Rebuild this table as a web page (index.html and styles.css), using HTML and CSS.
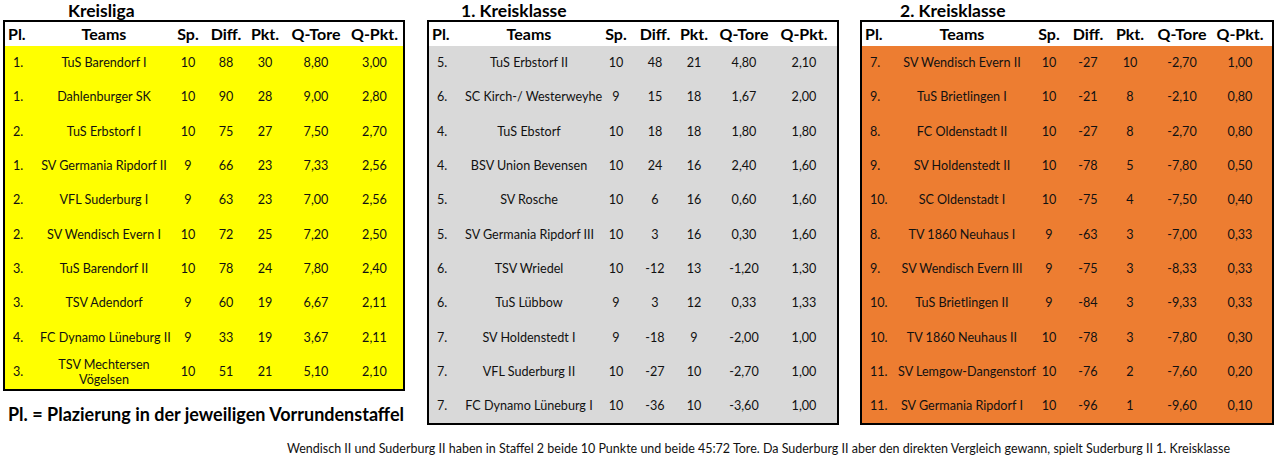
FILE: index.html
```html
<!DOCTYPE html>
<html lang="de">
<head>
<meta charset="utf-8">
<title>Tabellen</title>
<link rel="stylesheet" href="styles.css">
</head>
<body>
<div class="page">
  <div class="groups">
    <section class="group g1">
      <h2 class="title">Kreisliga</h2>
      <table class="tbl yellow">
        <colgroup><col class="c-pl"><col class="c-team"><col class="c-sp"><col class="c-diff"><col class="c-pkt"><col class="c-qt"><col class="c-qp"></colgroup>
        <thead><tr><th class="pl">Pl.</th><th>Teams</th><th>Sp.</th><th>Diff.</th><th>Pkt.</th><th>Q-Tore</th><th>Q-Pkt.</th></tr></thead>
        <tbody>
          <tr><td class="pl">1.</td><td class="team">TuS Barendorf I</td><td>10</td><td>88</td><td>30</td><td>8,80</td><td>3,00</td></tr>
          <tr><td class="pl">1.</td><td class="team">Dahlenburger SK</td><td>10</td><td>90</td><td>28</td><td>9,00</td><td>2,80</td></tr>
          <tr><td class="pl">2.</td><td class="team">TuS Erbstorf I</td><td>10</td><td>75</td><td>27</td><td>7,50</td><td>2,70</td></tr>
          <tr><td class="pl">1.</td><td class="team">SV Germania Ripdorf II</td><td>9</td><td>66</td><td>23</td><td>7,33</td><td>2,56</td></tr>
          <tr><td class="pl">2.</td><td class="team">VFL Suderburg I</td><td>9</td><td>63</td><td>23</td><td>7,00</td><td>2,56</td></tr>
          <tr><td class="pl">2.</td><td class="team">SV Wendisch Evern I</td><td>10</td><td>72</td><td>25</td><td>7,20</td><td>2,50</td></tr>
          <tr><td class="pl">3.</td><td class="team">TuS Barendorf II</td><td>10</td><td>78</td><td>24</td><td>7,80</td><td>2,40</td></tr>
          <tr><td class="pl">3.</td><td class="team">TSV Adendorf</td><td>9</td><td>60</td><td>19</td><td>6,67</td><td>2,11</td></tr>
          <tr><td class="pl">4.</td><td class="team">FC Dynamo Lüneburg II</td><td>9</td><td>33</td><td>19</td><td>3,67</td><td>2,11</td></tr>
          <tr><td class="pl">3.</td><td class="team wrap">TSV Mechtersen<br>Vögelsen</td><td>10</td><td>51</td><td>21</td><td>5,10</td><td>2,10</td></tr>
        </tbody>
      </table>
      <p class="legend">Pl. = Plazierung in der jeweiligen Vorrundenstaffel</p>
    </section>

    <section class="group g2">
      <h2 class="title">1. Kreisklasse</h2>
      <table class="tbl grey">
        <colgroup><col class="c-pl"><col class="c-team"><col class="c-sp"><col class="c-diff"><col class="c-pkt"><col class="c-qt"><col class="c-qp"></colgroup>
        <thead><tr><th class="pl">Pl.</th><th>Teams</th><th>Sp.</th><th>Diff.</th><th>Pkt.</th><th>Q-Tore</th><th>Q-Pkt.</th></tr></thead>
        <tbody>
          <tr><td class="pl">5.</td><td class="team">TuS Erbstorf II</td><td>10</td><td>48</td><td>21</td><td>4,80</td><td>2,10</td></tr>
          <tr><td class="pl">6.</td><td class="team">SC Kirch-/ Westerweyhe</td><td>9</td><td>15</td><td>18</td><td>1,67</td><td>2,00</td></tr>
          <tr><td class="pl">4.</td><td class="team">TuS Ebstorf</td><td>10</td><td>18</td><td>18</td><td>1,80</td><td>1,80</td></tr>
          <tr><td class="pl">4.</td><td class="team">BSV Union Bevensen</td><td>10</td><td>24</td><td>16</td><td>2,40</td><td>1,60</td></tr>
          <tr><td class="pl">5.</td><td class="team">SV Rosche</td><td>10</td><td>6</td><td>16</td><td>0,60</td><td>1,60</td></tr>
          <tr><td class="pl">5.</td><td class="team">SV Germania Ripdorf III</td><td>10</td><td>3</td><td>16</td><td>0,30</td><td>1,60</td></tr>
          <tr><td class="pl">6.</td><td class="team">TSV Wriedel</td><td>10</td><td>-12</td><td>13</td><td>-1,20</td><td>1,30</td></tr>
          <tr><td class="pl">6.</td><td class="team">TuS Lübbow</td><td>9</td><td>3</td><td>12</td><td>0,33</td><td>1,33</td></tr>
          <tr><td class="pl">7.</td><td class="team">SV Holdenstedt I</td><td>9</td><td>-18</td><td>9</td><td>-2,00</td><td>1,00</td></tr>
          <tr><td class="pl">7.</td><td class="team">VFL Suderburg II</td><td>10</td><td>-27</td><td>10</td><td>-2,70</td><td>1,00</td></tr>
          <tr><td class="pl">7.</td><td class="team">FC Dynamo Lüneburg I</td><td>10</td><td>-36</td><td>10</td><td>-3,60</td><td>1,00</td></tr>
        </tbody>
      </table>
    </section>

    <section class="group g3">
      <h2 class="title">2. Kreisklasse</h2>
      <table class="tbl orange">
        <colgroup><col class="c-pl"><col class="c-team"><col class="c-sp"><col class="c-diff"><col class="c-pkt"><col class="c-qt"><col class="c-qp"></colgroup>
        <thead><tr><th class="pl">Pl.</th><th>Teams</th><th>Sp.</th><th>Diff.</th><th>Pkt.</th><th>Q-Tore</th><th>Q-Pkt.</th></tr></thead>
        <tbody>
          <tr><td class="pl">7.</td><td class="team">SV Wendisch Evern II</td><td>10</td><td>-27</td><td>10</td><td>-2,70</td><td>1,00</td></tr>
          <tr><td class="pl">9.</td><td class="team">TuS Brietlingen I</td><td>10</td><td>-21</td><td>8</td><td>-2,10</td><td>0,80</td></tr>
          <tr><td class="pl">8.</td><td class="team">FC Oldenstadt II</td><td>10</td><td>-27</td><td>8</td><td>-2,70</td><td>0,80</td></tr>
          <tr><td class="pl">9.</td><td class="team">SV Holdenstedt II</td><td>10</td><td>-78</td><td>5</td><td>-7,80</td><td>0,50</td></tr>
          <tr><td class="pl">10.</td><td class="team">SC Oldenstadt I</td><td>10</td><td>-75</td><td>4</td><td>-7,50</td><td>0,40</td></tr>
          <tr><td class="pl">8.</td><td class="team">TV 1860 Neuhaus I</td><td>9</td><td>-63</td><td>3</td><td>-7,00</td><td>0,33</td></tr>
          <tr><td class="pl">9.</td><td class="team">SV Wendisch Evern III</td><td>9</td><td>-75</td><td>3</td><td>-8,33</td><td>0,33</td></tr>
          <tr><td class="pl">10.</td><td class="team">TuS Brietlingen II</td><td>9</td><td>-84</td><td>3</td><td>-9,33</td><td>0,33</td></tr>
          <tr><td class="pl">10.</td><td class="team">TV 1860 Neuhaus II</td><td>10</td><td>-78</td><td>3</td><td>-7,80</td><td>0,30</td></tr>
          <tr><td class="pl">11.</td><td class="team">SV Lemgow-Dangenstorf</td><td>10</td><td>-76</td><td>2</td><td>-7,60</td><td>0,20</td></tr>
          <tr><td class="pl">11.</td><td class="team">SV Germania Ripdorf I</td><td>10</td><td>-96</td><td>1</td><td>-9,60</td><td>0,10</td></tr>
        </tbody>
      </table>
    </section>
  </div>
  <p class="note">Wendisch II und Suderburg II haben in Staffel 2 beide 10 Punkte und beide 45:72 Tore. Da Suderburg II aber den direkten Vergleich gewann, spielt Suderburg II 1. Kreisklasse</p>
</div>
</body>
</html>
```

FILE: styles.css
```css
html, body {
  margin: 0;
  padding: 0;
  background: #ffffff;
}

body {
  font-family: "Lato", "Open Sans", sans-serif;
  color: #111111;
  width: 1276px;
  height: 462px;
  overflow: hidden;
}

.page {
  padding-left: 3px;
}

.groups {
  display: flex;
  align-items: flex-start;
}

.group { flex: none; }
.g1 { width: 402px; }
.g2 { width: 412px; margin-left: 22px; }
.g3 { width: 414px; margin-left: 21px; }

.title {
  margin: 0;
  height: 20px;
  font-size: 17.5px;
  line-height: 21px;
  font-weight: 700;
  color: #000;
  white-space: nowrap;
}
.g1 .title { padding-left: 65px; }
.g2 .title { padding-left: 34px; }
.g3 .title { padding-left: 40px; }

.tbl {
  border: 2px solid #000;
  border-collapse: separate;
  border-spacing: 0;
  table-layout: fixed;
}
.g1 .tbl { width: 402px; }
.g2 .tbl { width: 412px; }
.g3 .tbl { width: 414px; }

.tbl th,
.tbl td {
  padding: 0;
  text-align: center;
  white-space: nowrap;
  overflow: visible;
}

.tbl th {
  height: 24px;
  background: #ffffff;
  font-size: 16px;
  font-weight: 700;
  color: #000;
  line-height: 24px;
}

.tbl td {
  height: 34.3px;
  font-size: 12.6px;
  line-height: 14px;
}

.tbl th.pl { text-align: left; padding-left: 3px; }
.tbl td.pl { text-align: left; padding-left: 8px; }
.tbl td.wrap { white-space: normal; line-height: 15px; }

.yellow tbody { background: #ffff00; }
.grey tbody { background: #d9d9d9; }
.orange tbody { background: #ed7d31; }

/* column widths */
.g1 .c-pl { width: 35px; }
.g1 .c-team { width: 128px; }
.g1 .c-sp { width: 40px; }
.g1 .c-diff { width: 36px; }
.g1 .c-pkt { width: 42px; }
.g1 .c-qt { width: 60px; }
.g1 .c-qp { width: 57px; }

.g2 .c-pl { width: 36px; }
.g2 .c-team { width: 128px; }
.g2 .c-sp { width: 46px; }
.g2 .c-diff { width: 32px; }
.g2 .c-pkt { width: 46px; }
.g2 .c-qt { width: 54px; }
.g2 .c-qp { width: 66px; }

.g3 .c-pl { width: 36px; }
.g3 .c-team { width: 128px; }
.g3 .c-sp { width: 46px; }
.g3 .c-diff { width: 32px; }
.g3 .c-pkt { width: 52px; }
.g3 .c-qt { width: 52px; }
.g3 .c-qp { width: 64px; }

.legend {
  margin: 12px 0 0 5px;
  font-size: 18px;
  line-height: 22px;
  font-weight: 700;
  color: #000;
  white-space: nowrap;
}

.note {
  margin: 17px 0 0 284px;
  font-size: 12.5px;
  line-height: 14px;
  white-space: nowrap;
}
```
